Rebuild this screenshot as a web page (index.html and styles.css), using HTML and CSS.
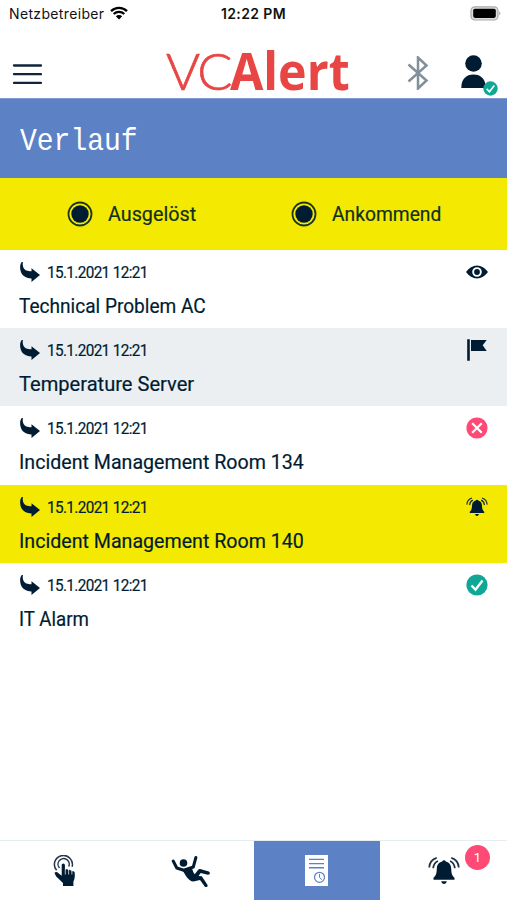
FILE: index.html
```html
<!DOCTYPE html>
<html lang="de">
<head>
<meta charset="utf-8">
<meta name="viewport" content="width=device-width, initial-scale=1">
<title>VCAlert – Verlauf</title>
<link rel="stylesheet" href="styles.css">
</head>
<body>
<svg class="defs" width="0" height="0" aria-hidden="true">
  <symbol id="arrow" viewBox="0 0 20 20"><path d="M1.800 0C.2 1.800-.2 4.500.4 8c.9 5.200 4.800 8.200 11.100 8.400V20L20 13 11.500 6.300v3C7.400 9.200 4.600 8.600 3.400 5.600 2.700 3.900 2.500 2 3 0z"/></symbol>
  <symbol id="bell" viewBox="0 0 32 28"><path d="M14.200 4.600a1.900 1.900 0 0 1 3.600 0c3.700.8 5.200 3.500 5.400 6.900.2 5.500 1.100 7.500 3.300 9.300v1.900H5.500v-1.900c2.200-1.800 3.100-3.800 3.300-9.300.2-3.400 1.700-6.100 5.400-6.900zM13.300 24.300h5.400c-.3 3.700-5.100 3.700-5.400 0z"/><path class="wave" d="M1.200 10.500C1.500 6.200 4.300 2.300 8.700.9M5.200 11.300C5.500 7.900 7.200 5.200 10 4M30.800 10.500C30.500 6.200 27.700 2.300 23.300.9M26.800 11.300C26.500 7.900 24.800 5.200 22 4"/></symbol>
  <symbol id="check" viewBox="0 0 22 22"><circle cx="11" cy="11" r="10.600" fill="#10a797"/><path d="M5.500 11.500l4 4.200 7-9.200" fill="none" stroke="#fff" stroke-width="2.400"/></symbol>
</svg>

<div class="status">
  <div class="carrier"><span>Netzbetreiber</span>
    <svg width="18" height="14" viewBox="0 0 18 14"><path d="M1 5.200a11.500 11.500 0 0 1 16 0M3.700 8a7.600 7.600 0 0 1 10.600 0" fill="none" stroke="#000" stroke-width="2.300"/><path d="M5.800 10.200a4.600 4.600 0 0 1 6.400 0L9 13.500z"/></svg>
  </div>
  <div class="clock">12:22 PM</div>
  <svg class="battery" width="31" height="15" viewBox="0 0 31 15"><rect x="1" y=".8" width="27" height="13.200" rx="3.800" fill="#ddd" stroke="#aaa" stroke-width="1.200"/><rect x="3.200" y="2.700" width="22.600" height="9.200" rx="1.800"/><path d="M29.200 5.200c1.600.8 1.600 3.400 0 4.200z" fill="#aaa"/></svg>
</div>

<header class="header">
  <svg class="menu" width="30" height="21" viewBox="0 0 30 21"><path d="M2 1.500h27M2 10.200h27M2 18.900h27" stroke="#10253b" stroke-width="2.300" stroke-linecap="round"/></svg>
  <div class="logo"><span class="thin">VC</span><span class="bold">Alert</span></div>
  <svg class="bluetooth" width="22" height="34" viewBox="0 0 22 34"><path d="M1.500 8.500l18 16-8.500 8V1.500l8.500 8-18 16" fill="none" stroke="#82909b" stroke-width="2.500"/></svg>
  <div class="user">
    <svg width="25" height="34" viewBox="0 0 25 34"><circle cx="12.500" cy="8.500" r="8.300"/><path d="M.3 33C.3 24 5 19.500 12.500 19.500S24.700 24 24.700 33z"/></svg>
    <svg class="user-ok" width="15" height="15"><use href="#check"/></svg>
  </div>
</header>

<div class="title"><h1>Verlauf</h1></div>

<div class="filters">
  <div class="filter"><svg width="26" height="26" viewBox="0 0 26 26"><circle cx="13" cy="13" r="11.500" fill="none" stroke="#1b3322" stroke-width="1.800"/><circle cx="13" cy="13" r="8.700"/></svg><span class="label triggered">Ausgelöst</span></div>
  <div class="filter"><svg width="26" height="26" viewBox="0 0 26 26"><circle cx="13" cy="13" r="11.500" fill="none" stroke="#1b3322" stroke-width="1.800"/><circle cx="13" cy="13" r="8.700"/></svg><span class="label incoming">Ankommend</span></div>
</div>

<main class="list">
  <article class="row">
    <div class="meta"><svg width="20" height="20"><use href="#arrow"/></svg><time>15.1.2021 12:21</time></div>
    <h2 class="technical">Technical Problem AC</h2>
    <svg class="state" width="22" height="22" viewBox="0 0 22 22"><path fill-rule="evenodd" d="M0 11C3 6.800 6.800 4.600 11 4.600S19 6.800 22 11c-3 4.200-6.800 6.400-11 6.400S3 15.200 0 11zm11-4.800a4.800 4.800 0 1 0 0 9.600 4.800 4.800 0 0 0 0-9.600z"/><circle cx="11" cy="11" r="2.900"/></svg>
  </article>
  <article class="row grey">
    <div class="meta"><svg width="20" height="20"><use href="#arrow"/></svg><time>15.1.2021 12:21</time></div>
    <h2 class="temperature">Temperature Server</h2>
    <svg class="state" width="22" height="22" viewBox="0 0 22 22"><path d="M1.200.3h2.600v21.400H1.200zM5 1h15.700l-4 5.300 4 5.700H5z"/></svg>
  </article>
  <article class="row">
    <div class="meta"><svg width="20" height="20"><use href="#arrow"/></svg><time>15.1.2021 12:21</time></div>
    <h2 class="incident">Incident Management Room 134</h2>
    <svg class="state" width="22" height="22" viewBox="0 0 22 22"><circle cx="11" cy="11" r="10.600" fill="#ff4a75"/><path d="M6.200 6.200l9.600 9.600M15.800 6.200l-9.600 9.600" stroke="#fff" stroke-width="2.200"/></svg>
  </article>
  <article class="row yellow">
    <div class="meta"><svg width="20" height="20"><use href="#arrow"/></svg><time>15.1.2021 12:21</time></div>
    <h2 class="incident">Incident Management Room 140</h2>
    <svg class="state" width="22" height="22"><use href="#bell"/></svg>
  </article>
  <article class="row">
    <div class="meta"><svg width="20" height="20"><use href="#arrow"/></svg><time>15.1.2021 12:21</time></div>
    <h2 class="it">IT Alarm</h2>
    <svg class="state" width="22" height="22"><use href="#check"/></svg>
  </article>
</main>

<nav class="tabs">
  <div class="tab">
    <svg class="hand" width="24" height="32" viewBox="0 0 24 32"><path d="M8.700 10a1.600 1.600 0 0 1 3.200 0v4.600l1.200-.4 1.900.4.400 1 .8-.8 2 .6.500 1.100 1.200-.4 1.700.9c.5 4 .2 6.800-1.200 9.500V31H10v-3L3.200 21.500 1.500 18c.8-1.500 2.600-1.300 4 .2l3.200 2.500z"/><path d="M12.300 14v5.500M15.600 15v4.500M18.900 16v3.500" stroke="#fff" stroke-width=".7"/><path d="M3.600 15.300a9 9 0 1 1 15.500-3.500M6.500 13a5.600 5.600 0 1 1 9.200-1.500" fill="none" stroke="#24384b" stroke-width="1.500"/></svg>
  </div>
  <div class="tab">
    <svg width="39" height="32" viewBox="0 0 39 32"><circle cx="12.500" cy="8" r="3.800"/><path d="M2.200 6l3.600 7 7 2.200 9.500-3.200 2.600-9.500" fill="none" stroke="#001c32" stroke-width="3" stroke-linecap="round" stroke-linejoin="round"/><path d="M11.200 14.500l9.700-2.400c.5 3 1.200 5.500 2.800 7.100l3.500-4.500c.6-.7 1.200-.8 2-.6l8.600 2.400c1.900.8 1 3.500-.9 3.200l-7.200-1.700-2.200 2.900 3.300.4 5.600 8.500c1 2-1.500 3.300-2.700 1.700l-4.700-6.400-6.500 1.500c-5.300-.6-8-6.100-11.300-12.100z"/></svg>
  </div>
  <div class="tab active">
    <svg width="23" height="31" viewBox="0 0 23 31"><path d="M0 0h23v31H0z" fill="#fff"/><g fill="none" stroke="#5c81c4"><path d="M4 4.400h15M4 8.600h15M4 12.800h15" stroke-width="1.400"/><circle cx="14.500" cy="22.300" r="5" stroke-width="1.200"/><path d="M14.500 19v3.500l2.400 2.200"/></g></svg>
  </div>
  <div class="tab">
    <svg class="bell" width="32" height="28"><use href="#bell"/></svg>
    <span class="badge">1</span>
  </div>
</nav>
</body>
</html>
```
FILE: styles.css
```css
* { box-sizing: border-box; }
body {
  margin: 0;
  height: 900px;
  display: flex;
  flex-direction: column;
  overflow: hidden;
  background: #fff;
  color: #001c32;
  font-family: Roboto, sans-serif;
}
svg { display: block; flex: none; fill: #001c32; }
.defs { position: absolute; }
.wave { fill: none; stroke: #1b3040; stroke-width: 1.700; }

.status {
  height: 28px;
  display: grid;
  grid-template-columns: 1fr auto 1fr;
  align-items: center;
  padding: 0 6px 2px 9px;
  color: #111;
  font-family: Inter, sans-serif;
  font-size: 14px;
}
.status svg { fill: #000; }
.carrier { display: flex; align-items: center; gap: 6px; letter-spacing: .35px; }
.clock { margin-right: 3px; font-weight: 600; letter-spacing: .4px; }
.battery { justify-self: end; }

.header {
  height: 71px;
  display: flex;
  align-items: flex-start;
  padding: 22px 9px 0 12px;
  border-bottom: 1px solid #7d9ad0;
}
.menu { margin-top: 14px; }
.logo {
  display: flex;
  align-items: baseline;
  width: 185px;
  margin-left: 124px;
  margin-top: -7px;
  color: #e84545;
  font: 52px/54px Lato, sans-serif;
  white-space: nowrap;
}
.thin { width: 65px; font-weight: 300; letter-spacing: -2px; -webkit-text-stroke: .7px #e84545; }
.bold { font-family: "Open Sans", sans-serif; font-weight: 700; transform: scaleX(.930); transform-origin: 0 50%; }
.bluetooth { margin: 6px 0 0 56px; }
.user { position: relative; margin: 5px 0 0 auto; width: 37px; }
.user-ok { position: absolute; right: 0; bottom: -7px; }

.title {
  height: 79px;
  display: flex;
  align-items: center;
  padding-left: 20px;
  background: #5c81c4;
}
h1 {
  margin: 6px 0 0;
  color: #fff;
  font: 28px/32px "Liberation Mono", monospace;
  transform: scaleY(1.150);
}

.filters {
  height: 72px;
  display: grid;
  grid-template-columns: 224px 1fr;
  align-items: center;
  padding-left: 67px;
  background: #f4e900;
}
.filter { display: flex; align-items: center; gap: 15px; }
.label, h2, time { -webkit-text-stroke: .2px currentColor; transform-origin: 0 50%; }
.label { font-size: 21px; line-height: 26px; color: #10301f; }
.triggered { transform: scaleX(.940); }
.incoming { transform: scaleX(.916); }

.row {
  position: relative;
  height: 78.200px;
  padding: 12px 19px 0 19px;
}
.grey { background: #ebeff1; }
.yellow { background: #f4e900; }
.meta { display: flex; align-items: center; height: 20px; gap: 7px; padding-left: 1px; }
time { font-size: 17px; line-height: 20px; letter-spacing: -.7px; transform: scaleX(.900); }
h2 {
  width: max-content;
  margin: 11px 0 0;
  font-size: 21px;
  font-weight: 400;
  line-height: 26px;
}
.technical { transform: scaleX(.908); }
.temperature { transform: scaleX(.957); }
.incident { transform: scaleX(.934); }
.it { transform: scaleX(.890); }
.state { position: absolute; right: 19px; top: 11px; }

.tabs {
  height: 60px;
  margin-top: auto;
  display: grid;
  grid-template-columns: repeat(4, 1fr);
  border-top: 1px solid #e5edf1;
}
.tab { position: relative; display: flex; align-items: center; justify-content: center; }
.hand { margin-left: 3px; }
.active { background: #5c81c4; }
.badge {
  position: absolute;
  top: 4px;
  right: 17px;
  width: 25px;
  height: 25px;
  border-radius: 50%;
  background: #ff4a75;
  color: #fff;
  font-size: 13px;
  line-height: 25px;
  text-align: center;
}
```
